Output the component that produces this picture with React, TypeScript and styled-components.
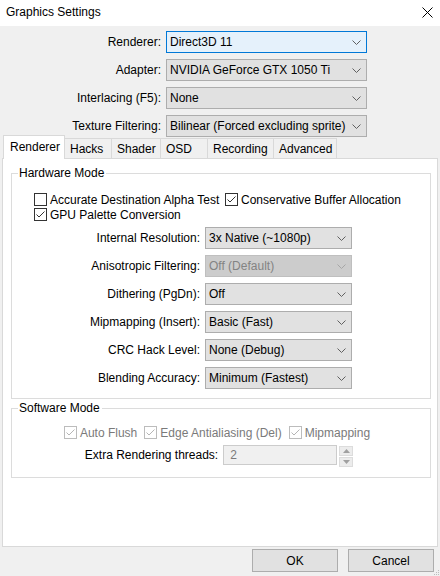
import React from "react";
import styled, { createGlobalStyle } from "styled-components";

const GlobalStyle = createGlobalStyle`
  html, body { margin: 0; padding: 0; background: #f0f0f0; }
  body {
    font-family: "Liberation Sans", Arial, sans-serif;
    font-size: 12px;
    color: #000;
  }
  * { box-sizing: border-box; }
`;

const Window = styled.div`
  width: 440px;
  height: 576px;
  display: flex;
  flex-direction: column;
  background: #f0f0f0;
  overflow: hidden;
`;

const TitleBar = styled.div`
  height: 26px;
  flex: none;
  background: #fff;
  display: flex;
  align-items: center;
  justify-content: space-between;
  padding: 0 7px 2px 6px;
  font-size: 12px;
`;

const TopForm = styled.div`
  height: 110px;
  flex: none;
  display: grid;
  grid-template-columns: 161px 201px;
  grid-auto-rows: 22px;
  column-gap: 5px;
  row-gap: 6px;
  padding-top: 5px;
`;

const Label = styled.div`
  text-align: right;
  align-self: center;
  white-space: nowrap;
`;

type ComboState = "normal" | "focus" | "disabled";

const ComboBox = styled.div<{ $state: ComboState }>`
  height: 22px;
  display: flex;
  align-items: center;
  justify-content: space-between;
  padding: 0 5px 0 3px;
  white-space: nowrap;
  border: 1px solid
    ${(p) => (p.$state === "focus" ? "#0078d7" : p.$state === "disabled" ? "#bfbfbf" : "#adadad")};
  background: ${(p) => (p.$state === "focus" ? "#e5f1fb" : p.$state === "disabled" ? "#cccccc" : "#e1e1e1")};
  color: ${(p) => (p.$state === "disabled" ? "#838383" : "#000")};
`;

const Chevron = ({ color }: { color: string }) => (
  <svg width="9" height="5" viewBox="0 0 9 5">
    <polyline points="0.5,0.5 4.5,4.5 8.5,0.5" fill="none" stroke={color} strokeWidth="1" />
  </svg>
);

const Combo = ({ value, state = "normal" }: { value: string; state?: ComboState }) => (
  <ComboBox $state={state}>
    <span>{value}</span>
    <Chevron color={state === "disabled" ? "#a6a6a6" : "#606060"} />
  </ComboBox>
);

const TabStrip = styled.div`
  height: 23px;
  flex: none;
  display: flex;
  align-items: flex-end;
  padding-left: 3px;
  margin-top: -1px;
`;

const Tab = styled.div<{ $active?: boolean; $w: number }>`
  width: ${(p) => p.$w}px;
  height: ${(p) => (p.$active ? 24 : 20)}px;
  margin-bottom: ${(p) => (p.$active ? -1 : 0)}px;
  margin-left: -1px;
  &:first-child { margin-left: 0; }
  position: relative;
  z-index: ${(p) => (p.$active ? 2 : 1)};
  border: 1px solid #d9d9d9;
  border-bottom: none;
  background: ${(p) => (p.$active ? "#fff" : "#f0f0f0")};
  display: flex;
  align-items: center;
  padding: ${(p) => (p.$active ? "0 0 2px 6px" : "1px 0 0 5px")};
  white-space: nowrap;
`;

const Panel = styled.div`
  flex: 1;
  margin: 0 2px;
  border: 1px solid #d9d9d9;
  background: #fff;
  display: flex;
  flex-direction: column;
`;

const Group = styled.fieldset<{ $top: number }>`
  margin: ${(p) => p.$top}px 6px 0 8px;
  padding: 0;
  border: 1px solid #dcdcdc;
  min-width: 0;
`;

const Legend = styled.legend`
  margin-left: 6px;
  padding: 0 2px 0 1px;
  line-height: 16px;
  height: 16px;
`;

const CheckBlock = styled.div`
  padding: 11px 0 0 22px;
  display: flex;
  flex-direction: column;
`;

const CheckRow = styled.div<{ $center?: boolean }>`
  display: flex;
  align-items: center;
  height: 15px;
  gap: 7px;
  justify-content: ${(p) => (p.$center ? "center" : "flex-start")};
  padding-right: ${(p) => (p.$center ? 8 : 0)}px;
`;

const CheckItem = styled.div<{ $w?: number; $disabled?: boolean }>`
  display: flex;
  align-items: center;
  gap: 3px;
  white-space: nowrap;
  width: ${(p) => (p.$w ? `${p.$w}px` : "auto")};
  flex: none;
  color: ${(p) => (p.$disabled ? "#7a7a7a" : "#000")};
`;

const Box = styled.div<{ $disabled?: boolean }>`
  width: 13px;
  height: 13px;
  flex: none;
  border: 1px solid ${(p) => (p.$disabled ? "#bcbcbc" : "#333")};
  background: #fff;
  display: flex;
  align-items: center;
  justify-content: center;
`;

const Check = ({
  label,
  checked,
  disabled,
  w,
}: {
  label: string;
  checked?: boolean;
  disabled?: boolean;
  w?: number;
}) => (
  <CheckItem $w={w} $disabled={disabled}>
    <Box $disabled={disabled}>
      {checked && (
        <svg width="11" height="11" viewBox="0 0 11 11">
          <polyline
            points="1.5,5.5 4,8 9.5,2.5"
            fill="none"
            stroke={disabled ? "#b5b5b5" : "#333"}
            strokeWidth="1"
          />
        </svg>
      )}
    </Box>
    <span>{label}</span>
  </CheckItem>
);

const ComboGrid = styled.div`
  display: grid;
  grid-template-columns: 188px 147px;
  grid-auto-rows: 22px;
  column-gap: 5px;
  row-gap: 6px;
  padding: 5px 0 9px 0;
`;

const SoftBody = styled.div`
  padding: 9px 0 10px 0;
  display: flex;
  flex-direction: column;
  gap: 5px;
`;

const SpinRow = styled.div`
  display: flex;
  align-items: flex-start;
  justify-content: center;
  padding-right: 4px;
  height: 22px;
`;

const SpinLabel = styled.div`
  line-height: 20px;
  margin-right: 5px;
  white-space: nowrap;
`;

const SpinInput = styled.div`
  width: 114px;
  height: 20px;
  border: 1px solid #cccccc;
  background: #f0f0f0;
  color: #7a7a7a;
  padding-left: 6px;
  line-height: 18px;
`;

const SpinButtons = styled.div`
  margin-left: 2px;
  display: flex;
  flex-direction: column;
  gap: 1px;
  padding-top: 1px;
`;

const SpinBtn = styled.div`
  width: 14px;
  height: 10px;
  border: 1px solid #dcdcdc;
  background: #ececec;
  display: flex;
  align-items: center;
  justify-content: center;
`;

const BottomBar = styled.div`
  height: 29px;
  flex: none;
  display: flex;
  justify-content: flex-end;
  align-items: flex-start;
  gap: 10px;
  padding: 2px 6px 0 0;
  position: relative;
`;

const Button = styled.div`
  width: 86px;
  height: 23px;
  border: 1px solid #adadad;
  background: #e1e1e1;
  display: flex;
  align-items: center;
  justify-content: center;
`;

const Grip = styled.svg`
  position: absolute;
  right: 0;
  bottom: 0;
`;

export default function App() {
  return (
    <>
      <GlobalStyle />
      <Window>
        <TitleBar>
          <span>Graphics Settings</span>
          <svg width="11" height="11" viewBox="0 0 11 11">
            <line x1="0.5" y1="0.5" x2="10.5" y2="10.5" stroke="#000" strokeWidth="1" />
            <line x1="10.5" y1="0.5" x2="0.5" y2="10.5" stroke="#000" strokeWidth="1" />
          </svg>
        </TitleBar>

        <TopForm>
          <Label>Renderer:</Label>
          <Combo value="Direct3D 11" state="focus" />
          <Label>Adapter:</Label>
          <Combo value="NVIDIA GeForce GTX 1050 Ti" />
          <Label>Interlacing (F5):</Label>
          <Combo value="None" />
          <Label>Texture Filtering:</Label>
          <Combo value="Bilinear (Forced excluding sprite)" />
        </TopForm>

        <TabStrip>
          <Tab $active $w={62}>Renderer</Tab>
          <Tab $w={48}>Hacks</Tab>
          <Tab $w={50}>Shader</Tab>
          <Tab $w={48}>OSD</Tab>
          <Tab $w={67}>Recording</Tab>
          <Tab $w={64}>Advanced</Tab>
        </TabStrip>

        <Panel>
          <Group $top={6}>
            <Legend>Hardware Mode</Legend>
            <CheckBlock>
              <CheckRow>
                <Check label="Accurate Destination Alpha Test" w={184} />
                <Check label="Conservative Buffer Allocation" checked />
              </CheckRow>
              <CheckRow>
                <Check label="GPU Palette Conversion" checked />
              </CheckRow>
            </CheckBlock>
            <ComboGrid>
              <Label>Internal Resolution:</Label>
              <Combo value="3x Native (~1080p)" />
              <Label>Anisotropic Filtering:</Label>
              <Combo value="Off (Default)" state="disabled" />
              <Label>Dithering (PgDn):</Label>
              <Combo value="Off" />
              <Label>Mipmapping (Insert):</Label>
              <Combo value="Basic (Fast)" />
              <Label>CRC Hack Level:</Label>
              <Combo value="None (Debug)" />
              <Label>Blending Accuracy:</Label>
              <Combo value="Minimum (Fastest)" />
            </ComboGrid>
          </Group>

          <Group $top={1}>
            <Legend>Software Mode</Legend>
            <SoftBody>
              <CheckRow $center>
                <Check label="Auto Flush" checked disabled />
                <Check label="Edge Antialiasing (Del)" checked disabled />
                <Check label="Mipmapping" checked disabled />
              </CheckRow>
              <SpinRow>
                <SpinLabel>Extra Rendering threads:</SpinLabel>
                <SpinInput>2</SpinInput>
                <SpinButtons>
                  <SpinBtn>
                    <svg width="7" height="4" viewBox="0 0 7 4">
                      <polygon points="0,4 3.5,0 7,4" fill="#a0a0a0" />
                    </svg>
                  </SpinBtn>
                  <SpinBtn>
                    <svg width="7" height="4" viewBox="0 0 7 4">
                      <polygon points="0,0 3.5,4 7,0" fill="#a0a0a0" />
                    </svg>
                  </SpinBtn>
                </SpinButtons>
              </SpinRow>
            </SoftBody>
          </Group>
        </Panel>

        <BottomBar>
          <Button>OK</Button>
          <Button>Cancel</Button>
          <Grip width="6" height="6" viewBox="0 0 6 6">
            <rect x="4" y="0" width="1" height="1" fill="#bdbdbd" />
            <rect x="2" y="2" width="1" height="1" fill="#bdbdbd" />
            <rect x="4" y="2" width="1" height="1" fill="#bdbdbd" />
            <rect x="0" y="4" width="1" height="1" fill="#bdbdbd" />
            <rect x="2" y="4" width="1" height="1" fill="#bdbdbd" />
            <rect x="4" y="4" width="1" height="1" fill="#bdbdbd" />
          </Grip>
        </BottomBar>
      </Window>
    </>
  );
}
